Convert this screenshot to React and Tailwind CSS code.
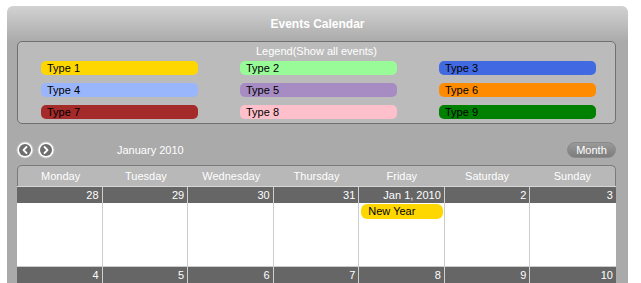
const types = [
  { name: 'Type 1', color: 'bg-[#ffd700]' },
  { name: 'Type 2', color: 'bg-[#98fb98]' },
  { name: 'Type 3', color: 'bg-[#4169e1]' },
  { name: 'Type 4', color: 'bg-[#99b5fb]' },
  { name: 'Type 5', color: 'bg-[#a68cc2]' },
  { name: 'Type 6', color: 'bg-[#ff8c00]' },
  { name: 'Type 7', color: 'bg-[#a52a2a]' },
  { name: 'Type 8', color: 'bg-[#ffc0cb]' },
  { name: 'Type 9', color: 'bg-[#008000]' },
];

const days = ['Monday', 'Tuesday', 'Wednesday', 'Thursday', 'Friday', 'Saturday', 'Sunday'];

const weeks = [
  ['28', '29', '30', '31', 'Jan 1, 2010', '2', '3'],
  ['4', '5', '6', '7', '8', '9', '10'],
];

function NavButton({ dir }) {
  return (
    <svg width="18" height="18" viewBox="0 0 18 18">
      <circle cx="9" cy="9" r="8.5" fill="#ffffff" opacity="0.35" />
      <circle cx="9" cy="9" r="7.5" fill="#ffffff" />
      <circle cx="9" cy="9" r="6" fill="#6e6e6e" />
      {dir === 'left' ? (
        <path d="M10.5 6 L7.5 9 L10.5 12" stroke="#fff" strokeWidth="1.8" fill="none" strokeLinecap="round" strokeLinejoin="round" />
      ) : (
        <path d="M7.5 6 L10.5 9 L7.5 12" stroke="#fff" strokeWidth="1.8" fill="none" strokeLinecap="round" strokeLinejoin="round" />
      )}
    </svg>
  );
}

export default function App() {
  return (
    <div className="bg-white min-h-[283px] pt-[6px] pl-[7px] font-['Liberation_Sans',Arial,sans-serif] text-[11px]">
      <div className="w-[621px] rounded-t-[6px] bg-[#aaaaaa] bg-gradient-to-b from-[#d2d2d2] to-[#aaaaaa] bg-[length:100%_36px] bg-no-repeat pb-4">
        <div className="h-[35px] flex items-center justify-center text-white font-bold text-[12px]">
          Events Calendar
        </div>

        <div className="ml-[10px] w-[599px] h-[83px] rounded-[5px] border border-[#707070] bg-[#bbbbbb] pt-[2px]">
          <div className="text-center text-white leading-[14px]">Legend(Show all events)</div>
          <div className="grid grid-cols-[199px_199px_157px] gap-y-[8px] pl-[23px] mt-[3px]">
            {types.map((t) => (
              <div key={t.name} className={`${t.color} w-[157px] h-[14px] rounded-[5px] pl-[6px] leading-[14px] text-black`}>
                {t.name}
              </div>
            ))}
          </div>
        </div>

        <div className="ml-[10px] w-[599px] h-[18px] mt-[17px] flex items-center">
          <div className="flex items-center gap-[3px] -ml-[1px]">
            <NavButton dir="left" />
            <NavButton dir="right" />
          </div>
          <div className="ml-[62px] text-white">January 2010</div>
          <div className="ml-auto h-[16px] w-[49px] rounded-full bg-gradient-to-b from-[#9a9a9a] to-[#7c7c7c] border border-[#8a8a8a] text-white flex items-center justify-center">
            Month
          </div>
        </div>

        <div className="ml-[10px] w-[599px] mt-[6px]">
          <div className="grid grid-cols-7 h-[21px] rounded-t-[5px] border border-b-0 border-[#7a7a7a] bg-[#b8b8b8] text-white">
            {days.map((d) => (
              <div key={d} className="flex items-center justify-center">{d}</div>
            ))}
          </div>
          <div className="h-[1px] bg-[#d6d6d6]" />
          {weeks.map((w, wi) => (
            <div key={wi}>
              <div className="grid grid-cols-7 h-[16px] bg-[#666666] text-white">
                {w.map((n, i) => (
                  <div key={i} className={`text-right pr-[3px] leading-[16px] ${i < 6 ? 'border-r border-[#cfcfcf]' : ''}`}>
                    {n}
                  </div>
                ))}
              </div>
              <div className="grid grid-cols-7 h-[64px] bg-white border-b border-[#cccccc]">
                {w.map((n, i) => (
                  <div key={i} className={`pt-[1px] pl-[2px] ${i < 6 ? 'border-r border-[#cccccc]' : ''}`}>
                    {wi === 0 && i === 4 && (
                      <div className="h-[15px] w-[82px] rounded-[6px] bg-[#ffd700] pl-[7px] leading-[15px] text-black">
                        New Year
                      </div>
                    )}
                  </div>
                ))}
              </div>
            </div>
          ))}
        </div>
      </div>
    </div>
  );
}
